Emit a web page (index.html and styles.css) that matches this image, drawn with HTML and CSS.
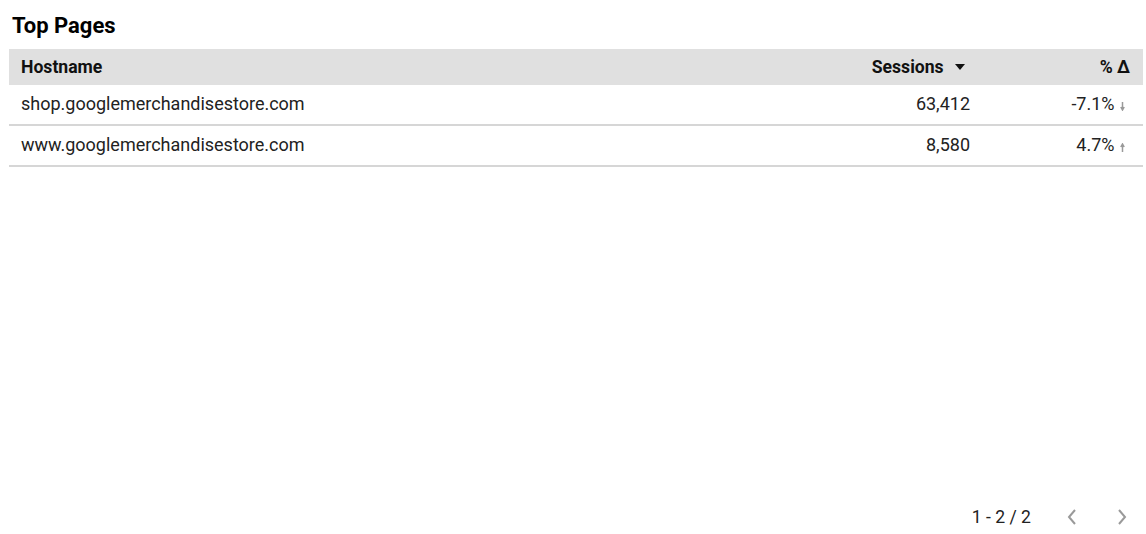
FILE: index.html
```html
<!DOCTYPE html>
<html>
<head>
<meta charset="utf-8">
<link rel="stylesheet" href="styles.css">
</head>
<body>
<div class="panel">
  <h1 class="title">Top Pages</h1>
  <div class="table">
    <div class="row head">
      <div class="c-host">Hostname</div>
      <div class="c-sess">Sessions <span class="sort"></span></div>
      <div class="c-pct">% Δ</div>
    </div>
    <div class="row">
      <div class="c-host">shop.googlemerchandisestore.com</div>
      <div class="c-sess">63,412</div>
      <div class="c-pct">-7.1% <svg class="arr" width="5" height="9" viewBox="0 0 5 9"><path d="M2.5 0V7M0.8 5L2.5 8L4.2 5" stroke="#9a9a9a" stroke-width="1.5" fill="none"/></svg></div>
    </div>
    <div class="row">
      <div class="c-host">www.googlemerchandisestore.com</div>
      <div class="c-sess">8,580</div>
      <div class="c-pct">4.7% <svg class="arr" width="5" height="9" viewBox="0 0 5 9"><path d="M2.5 9V2M0.8 4L2.5 1L4.2 4" stroke="#9a9a9a" stroke-width="1.5" fill="none"/></svg></div>
    </div>
  </div>
  <div class="spacer"></div>
  <div class="pager">
    <span class="count">1 - 2 / 2</span>
    <svg class="chev" width="12" height="18" viewBox="0 0 12 18"><path d="M9 2L3 9L9 16" stroke="#9a9a9a" stroke-width="2" fill="none"/></svg>
    <svg class="chev" width="12" height="18" viewBox="0 0 12 18"><path d="M3 2L9 9L3 16" stroke="#9a9a9a" stroke-width="2" fill="none"/></svg>
  </div>
</div>
</body>
</html>
```
FILE: styles.css
```css
html, body { margin: 0; padding: 0; background: #fff; }
body { font-family: Roboto, "Liberation Sans", sans-serif; color: #212121; }
.panel { width: 1146px; height: 534px; display: flex; flex-direction: column; box-sizing: border-box; padding: 0 3px 0 9px; }
.title { margin: 0; font-size: 22px; font-weight: 700; color: #000; padding: 13px 0 0 3px; height: 36px; line-height: 26px; box-sizing: border-box; }
.table { margin-top: 13px; }
.row { display: flex; align-items: center; height: 39px; box-sizing: border-box; padding-bottom: 3px; border-bottom: 2px solid #d6d6d6; font-size: 18px; color: #222; }
.row:not(.head) { height: 41px; }
.row.head { height: 36px; padding-bottom: 1px; border-bottom: none; background: #e0e0e0; font-weight: 700; color: #111; font-size: 17.6px; }
.c-host { flex: 1; padding-left: 12px; }
.c-sess { width: 200px; text-align: right; box-sizing: border-box; }
.row.head .c-sess { padding-right: 5px; }
.c-pct { width: 173px; text-align: right; padding-right: 18px; box-sizing: border-box; }
.row.head .c-pct { padding-right: 13px; }
.sort { display: inline-block; width: 0; height: 0; border-left: 5px solid transparent; border-right: 5px solid transparent; border-top: 6px solid #111; margin-left: 7px; vertical-align: middle; position: relative; top: -1px; }
.arr { margin-left: 1px; vertical-align: -1px; }
.spacer { flex: 1; }
.pager { display: flex; align-items: center; justify-content: flex-end; height: 34px; font-size: 17.6px; color: #222; padding-right: 15px; }
.count { margin-right: 35px; }
.chev { margin-left: 38px; }
.chev:first-of-type { margin-left: 0; }
```
